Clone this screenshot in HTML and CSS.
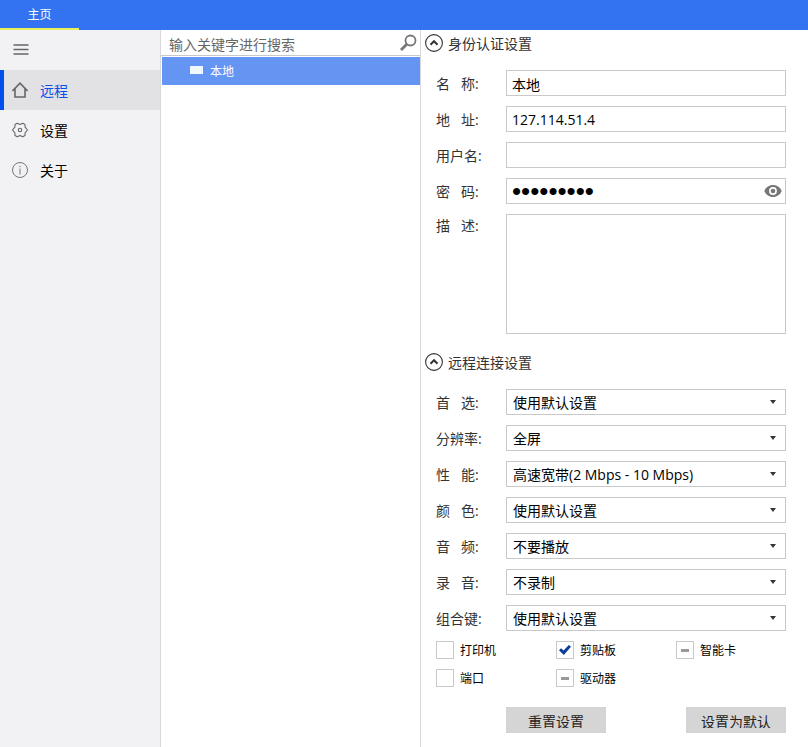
FILE: index.html
```html
<!DOCTYPE html>
<html lang="zh-CN">
<head>
    <meta charset="UTF-8">
    <meta name="viewport" content="width=device-width, initial-scale=1.0">
    <title>主页</title>
    <link rel="stylesheet" href="styles.css">
</head>
<body>
    <header class="topbar">
        <a class="tab" href="#">主页</a>
    </header>

    <div class="layout">
        <nav class="sidebar">
            <button class="menu-button" type="button" aria-label="菜单">
                <svg width="16" height="16" viewBox="0 0 16 16" fill="none" stroke="#666" stroke-width="1.5"><path d="M.5 3h15M.5 7.500h15M.5 12h15"/></svg>
            </button>
            <a class="nav-item active" href="#">
                <svg width="16" height="16" viewBox="0 0 16 16" fill="none" stroke="#666" stroke-width="1.600"><path d="M.5 9 8 1.200 15.500 9M3 6.800v8.200h10V6.800"/></svg>
                <span>远程</span>
            </a>
            <a class="nav-item" href="#">
                <svg width="16" height="16" viewBox="0 0 16 16" fill="none" stroke="#666" stroke-width="1.100"><path d="M5.300 1.200 8 2.500l2.700-1.300 2.300 1.300.1 2.700L15.500 8l-2.400 2.800-.1 2.700-2.300 1.300L8 13.500l-2.700 1.300L3 13.500l-.1-2.700L.5 8l2.400-2.800L3 2.500z" stroke-linejoin="round"/><circle cx="8" cy="8" r="1.700"/></svg>
                <span>设置</span>
            </a>
            <a class="nav-item" href="#">
                <svg width="16" height="16" viewBox="0 0 16 16" fill="none" stroke="#777" stroke-width="1"><circle cx="8" cy="8" r="7.500"/><path d="M8 6.500v6M8 3.800v1.400"/></svg>
                <span>关于</span>
            </a>
        </nav>

        <section class="hosts">
            <div class="search">
                <input type="text" placeholder="输入关键字进行搜索" aria-label="搜索">
                <svg width="18" height="18" viewBox="0 0 18 18" fill="none" stroke="#777"><circle cx="11.500" cy="6.500" r="5" stroke-width="1.800"/><path d="M8 10 2 16" stroke-width="2.800"/></svg>
            </div>
            <a class="host" href="#"><span class="host-icon"></span><span>本地</span></a>
        </section>

        <main class="settings">
            <form>
                <h2 class="section-title">
                    <svg width="18" height="18" viewBox="0 0 18 18" fill="none" stroke="#333"><circle cx="9" cy="9" r="8.400" stroke-width="1.100"/><path d="M5.500 10.700 9 7.200l3.500 3.500" stroke-width="2"/></svg>
                    <span>身份认证设置</span>
                </h2>
                <div class="fields">
                    <div class="row">
                        <label for="name">名&nbsp;&nbsp;&nbsp;称:</label>
                        <input class="control" type="text" id="name" value="本地">
                    </div>
                    <div class="row">
                        <label for="address">地&nbsp;&nbsp;&nbsp;址:</label>
                        <input class="control" type="text" id="address" value="127.114.51.4">
                    </div>
                    <div class="row">
                        <label for="user">用户名:</label>
                        <input class="control" type="text" id="user">
                    </div>
                    <div class="row">
                        <label for="password">密&nbsp;&nbsp;&nbsp;码:</label>
                        <div class="control password">
                            <input type="password" id="password" value="123456789">
                            <button type="button" aria-label="显示密码">
                                <svg width="18" height="12" viewBox="0 0 18 12"><path d="M9 0C5 0 1.700 2.400.3 6 1.700 9.600 5 12 9 12s7.300-2.400 8.700-6C16.300 2.400 13 0 9 0z" fill="#777"/><circle cx="9" cy="6" r="3.900" fill="#fff"/><circle cx="9" cy="6" r="2.300" fill="#777"/></svg>
                            </button>
                        </div>
                    </div>
                    <div class="row row-top">
                        <label for="description">描&nbsp;&nbsp;&nbsp;述:</label>
                        <textarea class="control" id="description"></textarea>
                    </div>
                </div>

                <h2 class="section-title second">
                    <svg width="18" height="18" viewBox="0 0 18 18" fill="none" stroke="#333"><circle cx="9" cy="9" r="8.400" stroke-width="1.100"/><path d="M5.500 10.700 9 7.200l3.500 3.500" stroke-width="2"/></svg>
                    <span>远程连接设置</span>
                </h2>
                <div class="fields">
                    <div class="row">
                        <label for="preset">首&nbsp;&nbsp;&nbsp;选:</label>
                        <div class="select"><select class="control" id="preset"><option>使用默认设置</option></select></div>
                    </div>
                    <div class="row">
                        <label for="resolution">分辨率:</label>
                        <div class="select"><select class="control" id="resolution"><option>全屏</option></select></div>
                    </div>
                    <div class="row">
                        <label for="performance">性&nbsp;&nbsp;&nbsp;能:</label>
                        <div class="select"><select class="control" id="performance"><option>高速宽带(2 Mbps - 10 Mbps)</option></select></div>
                    </div>
                    <div class="row">
                        <label for="color">颜&nbsp;&nbsp;&nbsp;色:</label>
                        <div class="select"><select class="control" id="color"><option>使用默认设置</option></select></div>
                    </div>
                    <div class="row">
                        <label for="audio">音&nbsp;&nbsp;&nbsp;频:</label>
                        <div class="select"><select class="control" id="audio"><option>不要播放</option></select></div>
                    </div>
                    <div class="row">
                        <label for="record">录&nbsp;&nbsp;&nbsp;音:</label>
                        <div class="select"><select class="control" id="record"><option>不录制</option></select></div>
                    </div>
                    <div class="row">
                        <label for="keys">组合键:</label>
                        <div class="select"><select class="control" id="keys"><option>使用默认设置</option></select></div>
                    </div>
                </div>

                <div class="checks">
                    <label><input type="checkbox"><span>打印机</span></label>
                    <label><input type="checkbox" checked><span>剪贴板</span></label>
                    <label><input type="checkbox" class="partial"><span>智能卡</span></label>
                    <label><input type="checkbox"><span>端口</span></label>
                    <label><input type="checkbox" class="partial"><span>驱动器</span></label>
                </div>

                <div class="actions">
                    <button type="button"><span>重置设置</span></button>
                    <button type="button"><span>设置为默认</span></button>
                </div>
            </form>
        </main>
    </div>

<script>
    document.querySelectorAll(".partial").forEach(function (box) {
        box.indeterminate = true
    })
</script>
</body>
</html>
```

FILE: styles.css
```css
* {
    box-sizing: border-box;
}
body {
    margin: 0;
    min-height: 100vh;
    display: flex;
    flex-direction: column;
    font-family: "Open Sans", "Noto Sans CJK SC", sans-serif;
    font-size: 14px;
    line-height: 20px;
    color: #000;
    background-color: #fff;
}
a {
    color: inherit;
    text-decoration: none;
}
input, select, textarea, button {
    font: inherit;
    color: inherit;
    border: none;
    border-radius: 0;
    padding: 0;
    margin: 0;
    background: none;
    outline: none;
}
svg {
    display: block;
    flex-shrink: 0;
}

.topbar {
    display: flex;
    height: 30px;
    background-color: #3373f2;
}
.tab {
    width: 79px;
    padding-top: 1px;
    line-height: 28px;
    font-size: 12px;
    text-align: center;
    color: #fff;
    border-bottom: 2px solid #e6f25a;
}

.layout {
    flex: 1;
    display: flex;
}

/* left menu */
.sidebar {
    width: 161px;
    flex-shrink: 0;
    background-color: #f2f2f4;
    border-right: 1px solid #d8d8da;
}
.menu-button {
    display: flex;
    align-items: center;
    width: 100%;
    height: 40px;
    padding-left: 13px;
}
.nav-item {
    display: flex;
    align-items: center;
    gap: 12px;
    height: 40px;
    padding-left: 8px;
    border-left: 4px solid transparent;
}
.nav-item.active {
    color: #0a50e8;
    background-color: #e2e2e4;
    border-left-color: #0050f0;
}
.nav-item span, .host span, .section-title span, .checks span {
    padding-top: 2px;
}

/* host list */
.hosts {
    width: 260px;
    flex-shrink: 0;
    border-right: 1px solid #d8d8da;
}
.search {
    display: flex;
    align-items: center;
    height: 26px;
    padding: 0 3px 0 8px;
    border-bottom: 1px solid #c8c8c8;
}
.search input {
    flex: 1;
    min-width: 0;
    height: 25px;
    padding-top: 3px;
}
.search input::placeholder {
    color: #666;
}
.host {
    display: flex;
    align-items: center;
    gap: 7px;
    height: 28px;
    margin: 1px 0 0 1px;
    padding-left: 28px;
    font-size: 12px;
    color: #fff;
    background-color: #6595f3;
}
.host .host-icon {
    width: 13px;
    height: 8px;
    padding: 0;
    margin-bottom: 3px;
    background-color: #f0f8ff;
}

/* settings */
.settings {
    flex: 1;
    min-width: 0;
    padding: 0 22px 14px 4px;
}
.section-title {
    display: flex;
    align-items: center;
    gap: 5px;
    height: 26px;
    margin: 0 0 14px;
    font-size: 14px;
    font-weight: normal;
    color: #333;
}
.section-title.second {
    margin-top: 15px;
}
.fields {
    display: flex;
    flex-direction: column;
    gap: 10px;
    padding-left: 11px;
}
.row {
    display: flex;
    align-items: center;
}
.row label {
    width: 70px;
    flex-shrink: 0;
    padding-top: 2px;
    color: #333;
}
.row-top {
    align-items: flex-start;
}
.control {
    flex: 1;
    min-width: 0;
    height: 26px;
    padding: 1px 5px 0;
    border: 1px solid #c9c9c9;
    background-color: #fff;
}
textarea.control {
    height: 120px;
    resize: none;
}
.password {
    display: flex;
    align-items: center;
    padding: 0 3px 0 5px;
}
.password input {
    flex: 1;
    min-width: 0;
    height: 24px;
    font-family: "Liberation Sans", Arial, sans-serif;
    font-size: 26px;
    line-height: 24px;
}
.select {
    flex: 1;
    display: flex;
    position: relative;
}
.select select {
    appearance: none;
    padding: 1px 24px 0 6px;
}
.select::after {
    content: "";
    position: absolute;
    right: 10px;
    top: 11px;
    border: 3px solid transparent;
    border-top: 4px solid #333;
    border-bottom: none;
    pointer-events: none;
}

.checks {
    display: grid;
    grid-template-columns: repeat(3, 120px);
    gap: 10px 0;
    margin-top: 10px;
    padding-left: 11px;
    font-size: 12px;
}
.checks label {
    display: flex;
    align-items: center;
    gap: 6px;
    height: 18px;
}
.checks input {
    appearance: none;
    display: grid;
    place-items: center;
    width: 18px;
    height: 18px;
    border: 1px solid #c9c9c9;
    background-color: #fff;
}
.checks input:checked::after {
    content: "";
    width: 12px;
    height: 10px;
    background-color: #0a3f9c;
    clip-path: polygon(0 52%, 17% 32%, 38% 56%, 82% 0, 100% 18%, 40% 100%);
}
.checks input:indeterminate::after {
    content: "";
    width: 8px;
    height: 3px;
    background-color: #999;
}

.actions {
    display: flex;
    justify-content: space-between;
    margin-top: 20px;
    padding-left: 81px;
}
.actions button {
    width: 100px;
    height: 26px;
    padding: 5px 0;
    color: #222;
    background-color: #d5d5d5;
}
.actions span {
    display: block;
    height: 16px;
    line-height: 20px;
    overflow: hidden;
}
```
